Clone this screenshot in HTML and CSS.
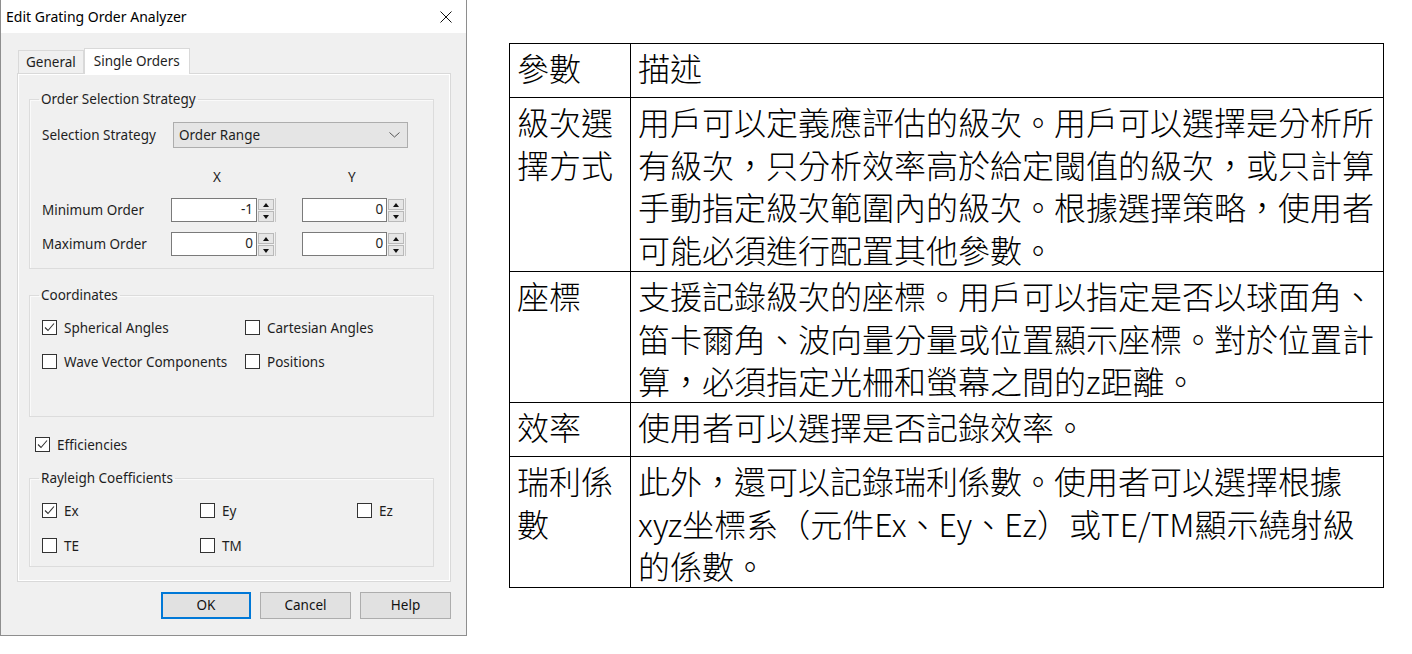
FILE: index.html
```html
<!DOCTYPE html>
<html lang="zh-Hant">
<head>
  <meta charset="UTF-8" />
  <title>Edit Grating Order Analyzer</title>
  <link rel="stylesheet" href="styles.css">
</head>
<body>

  <!-- Dialog window -->
  <div class="dialog">
    <div class="titlebar">
      <span class="title">Edit Grating Order Analyzer</span>
      <svg class="close" width="12" height="12" viewBox="0 0 12 12"><path d="M0.5 0.5L11.5 11.5M11.5 0.5L0.5 11.5" stroke="#111" stroke-width="1" fill="none"/></svg>
    </div>

    <div class="tabs">
      <div class="tab">General</div>
      <div class="tab active">Single Orders</div>
    </div>

    <div class="panel">
      <fieldset class="group strategy">
        <legend>Order Selection Strategy</legend>
        <div class="order-grid">
          <span class="lbl">Selection Strategy</span>
          <div class="select">
            <span>Order Range</span>
            <svg width="11" height="6" viewBox="0 0 11 6"><polyline points="0.5,0.5 5.5,5 10.5,0.5" stroke="#555" fill="none"/></svg>
          </div>

          <span></span>
          <span class="axis">X</span>
          <span></span>
          <span class="axis y">Y</span>

          <span class="lbl">Minimum Order</span>
          <div class="spin"><div class="num">-1</div><div class="arrows"><span class="btn up"></span><span class="btn down"></span></div></div>
          <span></span>
          <div class="spin"><div class="num">0</div><div class="arrows"><span class="btn up"></span><span class="btn down"></span></div></div>

          <span class="lbl">Maximum Order</span>
          <div class="spin"><div class="num">0</div><div class="arrows"><span class="btn up"></span><span class="btn down"></span></div></div>
          <span></span>
          <div class="spin"><div class="num">0</div><div class="arrows"><span class="btn up"></span><span class="btn down"></span></div></div>
        </div>
      </fieldset>

      <fieldset class="group coords">
        <legend>Coordinates</legend>
        <div class="check-grid two">
          <div class="check"><span class="box on"></span>Spherical Angles</div>
          <div class="check"><span class="box"></span>Cartesian Angles</div>
          <div class="check"><span class="box"></span>Wave Vector Components</div>
          <div class="check"><span class="box"></span>Positions</div>
        </div>
      </fieldset>

      <div class="check single"><span class="box on"></span>Efficiencies</div>

      <fieldset class="group rayleigh">
        <legend>Rayleigh Coefficients</legend>
        <div class="check-grid three">
          <div class="check"><span class="box on"></span>Ex</div>
          <div class="check"><span class="box"></span>Ey</div>
          <div class="check"><span class="box"></span>Ez</div>
          <div class="check"><span class="box"></span>TE</div>
          <div class="check"><span class="box"></span>TM</div>
        </div>
      </fieldset>
    </div>

    <div class="buttons">
      <div class="button default">OK</div>
      <div class="button">Cancel</div>
      <div class="button">Help</div>
    </div>
  </div>

  <!-- Parameter table -->
  <table class="params">
    <tr class="short">
      <td class="name">參數</td>
      <td>描述</td>
    </tr>
    <tr>
      <td class="name">級次選<br>擇方式</td>
      <td>用戶可以定義應評估的級次。用戶可以選擇是分析所<br>有級次，只分析效率高於給定閾值的級次，或只計算<br>手動指定級次範圍內的級次。根據選擇策略，使用者<br>可能必須進行配置其他參數。</td>
    </tr>
    <tr>
      <td class="name">座標</td>
      <td>支援記錄級次的座標。用戶可以指定是否以球面角、<br>笛卡爾角、波向量分量或位置顯示座標。對於位置計<br>算，必須指定光柵和螢幕之間的z距離。</td>
    </tr>
    <tr class="short">
      <td class="name">效率</td>
      <td>使用者可以選擇是否記錄效率。</td>
    </tr>
    <tr>
      <td class="name">瑞利係<br>數</td>
      <td>此外，還可以記錄瑞利係數。使用者可以選擇根據<br>xyz坐標系（元件Ex、Ey、Ez）或TE/TM顯示繞射級<br>的係數。</td>
    </tr>
  </table>

</body>
</html>
```

FILE: styles.css
```css
* {
  box-sizing: border-box;
  margin: 0;
  padding: 0;
}

body {
  display: flex;
  align-items: flex-start;
  background: #fff;
  font-family: "Noto Sans", sans-serif;
}

/* ---- dialog ---- */
.dialog {
  width: 467px;
  height: 636px;
  flex-shrink: 0;
  background: #f0f0f0;
  border: 1px solid #8e8e8e;
  border-top: none;
  font-size: 13.5px;
  color: #1e1e1e;
}

.titlebar {
  height: 33px;
  background: #fff;
  display: flex;
  align-items: center;
  justify-content: space-between;
  padding: 0 14px 0 5px;
}

.title {
  font-size: 14px;
  color: #000;
}

.tabs {
  display: flex;
  align-items: flex-end;
  height: 40px;
  padding-left: 17px;
}

.tab {
  height: 23px;
  padding: 0 7px;
  line-height: 23px;
  border: 1px solid #d9d9d9;
  border-bottom: none;
  background: #f0f0f0;
}

.tab.active {
  height: 26px;
  line-height: 24px;
  padding: 0 9px;
  margin-bottom: -1px;
  background: #fff;
  position: relative;
}

.panel {
  width: 434px;
  height: 509px;
  margin-left: 16px;
  padding: 17px 16px 0 11px;
  border: 1px solid #d9d9d9;
  box-shadow: inset 1px 1px 0 #fff, inset -1px -1px 0 #fff;
}

.group {
  border: 1px solid #dcdcdc;
  box-shadow: inset 1px 1px 0 #fafafa;
  padding: 0 0 0 12px;
}

.group legend {
  margin-left: -3px;
  padding: 0 2px;
  line-height: 16px;
}

.strategy {
  padding-top: 15px;
  padding-bottom: 12px;
}

.order-grid {
  display: grid;
  grid-template-columns: 129px 105px 26px 104px;
  grid-template-rows: 26px 30px 24px 24px;
  row-gap: 10px;
  align-items: center;
}

.order-grid .select {
  grid-column: 2 / 5;
  margin: 0 -2px 0 2px;
}

.axis {
  align-self: end;
  margin-bottom: 2px;
  padding-left: 42px;
}

.axis.y {
  padding-left: 46px;
}

.select {
  height: 26px;
  display: flex;
  align-items: center;
  justify-content: space-between;
  padding: 0 7px 0 5px;
  background: #e5e5e5;
  border: 1px solid #adadad;
}

.spin {
  display: flex;
  height: 24px;
}

.num {
  width: 86px;
  height: 24px;
  background: #fff;
  border: 1px solid #7a7a7a;
  text-align: right;
  padding-right: 3px;
  line-height: 21px;
  font-size: 13.5px;
}

.arrows {
  width: 19px;
  display: flex;
  flex-direction: column;
  justify-content: space-between;
  padding: 1px 0 0 1px;
  border-right: 1px solid #c8c8c8;
}

.arrows .btn {
  height: 11px;
  width: 16px;
  background: #e6e6e6;
  border: 1px solid #b9b9b9;
  display: flex;
  align-items: center;
  justify-content: center;
}

.arrows .btn::after {
  content: "";
  border-left: 3.5px solid transparent;
  border-right: 3.5px solid transparent;
}

.arrows .up::after {
  border-bottom: 4px solid #111;
}

.arrows .down::after {
  border-top: 4px solid #111;
}

/* checkboxes */
.check {
  display: flex;
  align-items: center;
  height: 17px;
  white-space: nowrap;
}

.box {
  width: 15px;
  height: 15px;
  margin-right: 7px;
  background: #fff;
  border: 1px solid #333;
  flex-shrink: 0;
}

.box.on {
  background: #fff url("data:image/svg+xml,%3Csvg xmlns='http://www.w3.org/2000/svg' width='13' height='13'%3E%3Cpolyline points='2,6.5 5,9.5 11,2.5' fill='none' stroke='%23333' stroke-width='1.1'/%3E%3C/svg%3E") no-repeat center;
}

.check-grid {
  display: grid;
  row-gap: 17px;
}

.check-grid.two {
  grid-template-columns: 203px 1fr;
}

.check-grid.three {
  grid-template-columns: 158px 157px 1fr;
  row-gap: 18px;
}

.coords {
  margin-top: 18px;
  padding-top: 16px;
  padding-bottom: 46px;
}

.check.single {
  margin: 19px 0 0 6px;
}

.rayleigh {
  margin-top: 17px;
  padding-top: 16px;
  padding-bottom: 12px;
}

.buttons {
  display: flex;
  justify-content: flex-end;
  gap: 9px;
  margin-top: 10px;
  padding-right: 15px;
}

.button {
  width: 91px;
  height: 27px;
  line-height: 25px;
  text-align: center;
  background: #e1e1e1;
  border: 1px solid #adadad;
  color: #111;
}

.button.default {
  width: 90px;
  border-color: #0078d7;
  box-shadow: inset 0 0 0 1px #0078d7;
}

/* ---- parameter table ---- */
.params {
  margin: 43px 0 0 42px;
  width: 875px;
  border-collapse: collapse;
  font-family: "Noto Sans CJK TC", sans-serif;
  font-size: 32px;
  font-weight: 300;
  line-height: 42.7px;
  color: #000;
}

.params td {
  border: 1px solid #000;
  padding: 2px 7px 0;
  vertical-align: top;
  white-space: nowrap;
}

.params .name {
  width: 121px;
}

.params .short td {
  height: 54px;
}
```
